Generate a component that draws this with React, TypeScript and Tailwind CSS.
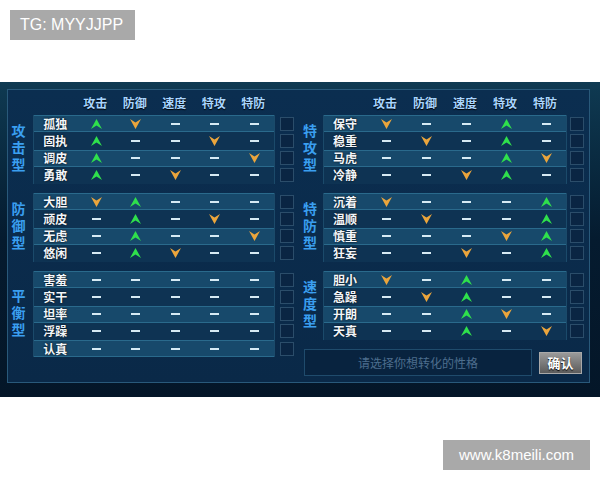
import React from "react";

type Mark = "u" | "d" | "-";

type Group = { label: string; rows: [string, Mark[]][] };

const leftGroups: Group[] = [
  {
    label: "攻击型",
    rows: [
      ["孤独", ["u", "d", "-", "-", "-"]],
      ["固执", ["u", "-", "-", "d", "-"]],
      ["调皮", ["u", "-", "-", "-", "d"]],
      ["勇敢", ["u", "-", "d", "-", "-"]],
    ],
  },
  {
    label: "防御型",
    rows: [
      ["大胆", ["d", "u", "-", "-", "-"]],
      ["顽皮", ["-", "u", "-", "d", "-"]],
      ["无虑", ["-", "u", "-", "-", "d"]],
      ["悠闲", ["-", "u", "d", "-", "-"]],
    ],
  },
  {
    label: "平衡型",
    rows: [
      ["害羞", ["-", "-", "-", "-", "-"]],
      ["实干", ["-", "-", "-", "-", "-"]],
      ["坦率", ["-", "-", "-", "-", "-"]],
      ["浮躁", ["-", "-", "-", "-", "-"]],
      ["认真", ["-", "-", "-", "-", "-"]],
    ],
  },
];

const rightGroups: Group[] = [
  {
    label: "特攻型",
    rows: [
      ["保守", ["d", "-", "-", "u", "-"]],
      ["稳重", ["-", "d", "-", "u", "-"]],
      ["马虎", ["-", "-", "-", "u", "d"]],
      ["冷静", ["-", "-", "d", "u", "-"]],
    ],
  },
  {
    label: "特防型",
    rows: [
      ["沉着", ["d", "-", "-", "-", "u"]],
      ["温顺", ["-", "d", "-", "-", "u"]],
      ["慎重", ["-", "-", "-", "d", "u"]],
      ["狂妄", ["-", "-", "d", "-", "u"]],
    ],
  },
  {
    label: "速度型",
    rows: [
      ["胆小", ["d", "-", "u", "-", "-"]],
      ["急躁", ["-", "d", "u", "-", "-"]],
      ["开朗", ["-", "-", "u", "d", "-"]],
      ["天真", ["-", "-", "u", "-", "d"]],
    ],
  },
];

const stats = ["攻击", "防御", "速度", "特攻", "特防"];

const cjk = { fontFamily: '"Noto Sans CJK SC", "Noto Sans", sans-serif' };

function Cell({ mark }: { mark: Mark }) {
  if (mark === "u")
    return (
      <svg width="11" height="10" viewBox="0 0 11 10">
        <polygon points="5.5,0 11,10 5.5,6.5 0,10" fill="#2fe04c" />
      </svg>
    );
  if (mark === "d")
    return (
      <svg width="11" height="10" viewBox="0 0 11 10">
        <polygon points="0,0 5.5,3.5 11,0 5.5,10" fill="#eba53c" />
      </svg>
    );
  return <div className="w-[9px] h-[2px] bg-[#d6eaf4]" />;
}

function Half({
  groups,
  labelW,
  nameW,
  colW,
  boxGap,
  footer,
}: {
  groups: Group[];
  labelW: string;
  nameW: string;
  colW: string;
  boxGap: string;
  footer?: React.ReactNode;
}) {
  return (
    <div className="flex flex-col">
      <div className="h-[25px] flex items-center">
        <div className={labelW} />
        <div className={nameW} />
        {stats.map((s) => (
          <div
            key={s}
            className={`${colW} text-center text-[12px] leading-[12px] font-bold text-[#a9d6ff] [text-shadow:0_1px_1px_#000]`}
          >
            {s}
          </div>
        ))}
      </div>
      <div className="flex flex-col gap-[9px]">
        {groups.map((g) => (
          <div key={g.label} className="flex">
            <div className={`${labelW} flex items-center justify-center`}>
              <div className="[writing-mode:vertical-rl] text-[14px] leading-[16px] tracking-[3px] font-bold text-[#3a9ff0]">
                {g.label}
              </div>
            </div>
            <div className="flex flex-col border-x border-[#1b4a6a]">
              {g.rows.map(([name, marks], i) => (
                <div
                  key={name}
                  className={`h-[17.25px] flex items-center ${
                    i % 2 === 0
                      ? "bg-[#17496b] border-y border-[#2a6a8c]"
                      : "bg-[#0e3353]"
                  }`}
                >
                  <div
                    className={`${nameW} text-center text-[12px] leading-[12px] font-bold text-[#f2f6fa] [text-shadow:0_0_2px_#000]`}
                  >
                    {name}
                  </div>
                  {marks.map((m, j) => (
                    <div key={j} className={`${colW} flex justify-center`}>
                      <Cell mark={m} />
                    </div>
                  ))}
                </div>
              ))}
            </div>
            <div className={`flex flex-col ${boxGap}`}>
              {g.rows.map(([name]) => (
                <div key={name} className="h-[17.25px] flex items-center">
                  <div className="w-[14px] h-[14px] border border-[#2b4d6a] bg-[#0a2543]" />
                </div>
              ))}
            </div>
          </div>
        ))}
      </div>
      {footer}
    </div>
  );
}

export default function App() {
  return (
    <div className="w-[600px] h-[480px] bg-white relative overflow-hidden" style={cjk}>
      <div className="h-[82px]" />
      <div className="h-[315px] bg-gradient-to-b from-[#0f3a52] via-[#051b2f] to-[#041628] pt-[7px] pl-[7px] pr-[10px]">
        <div className="h-[294px] border border-[#29597a] bg-gradient-to-b from-[#0b2e50] to-[#0a2948] flex">
          <div className="w-[289px]">
            <Half
              groups={leftGroups}
              labelW="w-[21px] mr-[4px]"
              nameW="w-[42.5px]"
              colW="w-[39.5px]"
              boxGap="ml-[5px]"
            />
          </div>
          <div className="w-[290px]">
            <Half
              groups={rightGroups}
              labelW="w-[26px]"
              nameW="w-[42px]"
              colW="w-[40px]"
              boxGap="ml-[3px]"
              footer={
                <div className="mt-[9px] ml-[7px] flex items-center gap-[7px]">
                  <div className="w-[228px] h-[27px] border border-[#1f4b6c] bg-[#08233f] flex items-center justify-center text-[12px] text-[#4d6e8e]">
                    请选择你想转化的性格
                  </div>
                  <div className="w-[43px] h-[22px] border border-[#a9a9a9] bg-gradient-to-b from-[#9a9a9a] to-[#5c5c5c] flex items-center justify-center text-[13px] font-bold text-white [text-shadow:0_1px_1px_#000]">
                    确认
                  </div>
                </div>
              }
            />
          </div>
        </div>
      </div>
      <div
        className="absolute left-[10px] top-[10px] w-[125px] h-[30px] bg-[#a9a9a9] flex items-center pl-[10px] text-[16px] text-white"
        style={{ fontFamily: '"Liberation Sans", Arial, sans-serif' }}
      >
        TG: MYYJJPP
      </div>
      <div
        className="absolute left-[443px] top-[440px] w-[147px] h-[30px] bg-[#a9a9a9] flex items-center justify-center text-[15px] text-white"
        style={{ fontFamily: '"Liberation Sans", Arial, sans-serif' }}
      >
        www.k8meili.com
      </div>
    </div>
  );
}
